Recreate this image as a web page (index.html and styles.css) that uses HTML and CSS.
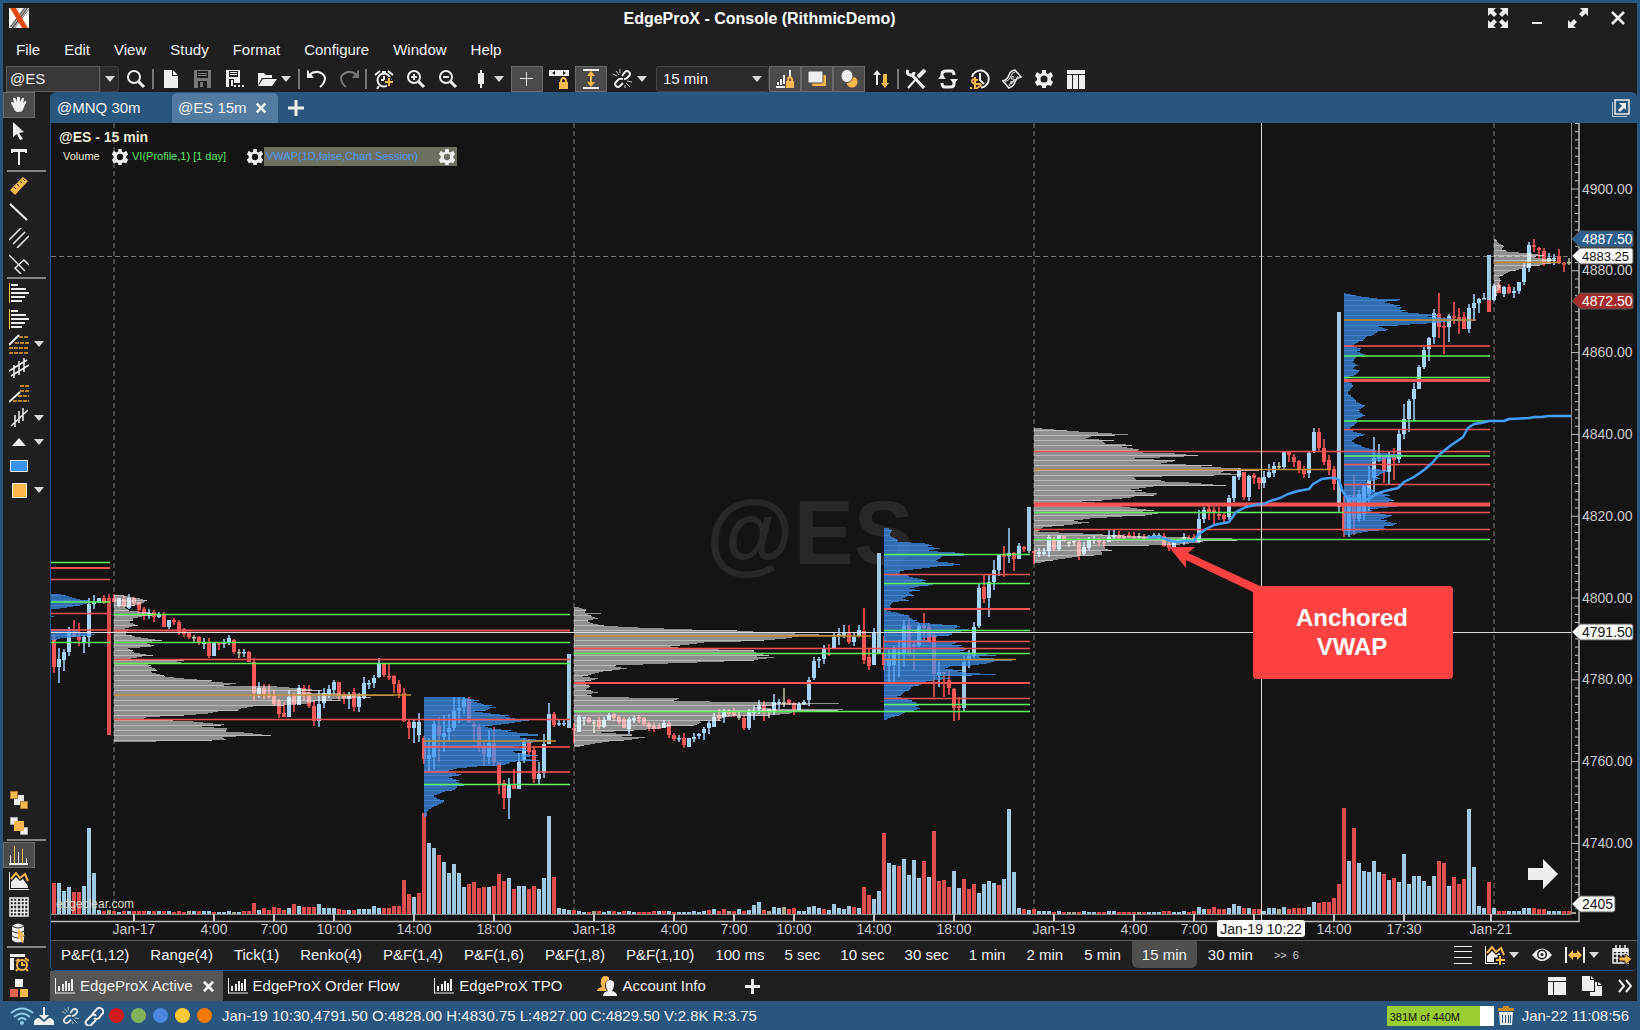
FILE: index.html
```html
<!DOCTYPE html>
<html lang="en">
<head>
<meta charset="utf-8">
<title>EdgeProX - Console (RithmicDemo)</title>
<link rel="stylesheet" href="styles.css">
</head>
<body>
<svg class="defs" aria-hidden="true">
  <defs>
    <symbol id="caret" viewBox="0 0 10 6"><path fill="#d8d8d8" d="M0 0h10L5 6z"/></symbol>
    <symbol id="gear" viewBox="0 0 20 20"><path fill="#eee" fill-rule="evenodd" d="M8 1h4v3l2 1 3-2 2 4-2 2v2l2 2-2 4-3-1-2 1v2H8v-2l-2-1-3 1-2-4 2-2V9L1 7l2-4 3 2 2-1zM10 6.500a3.500 3.500 0 100 7 3.500 3.500 0 000-7z"/></symbol>
    <symbol id="close" viewBox="0 0 14 14"><path stroke="#f0f0f0" stroke-width="3" d="M2 2l10 10M12 2L2 12"/></symbol>
    <symbol id="plus" viewBox="0 0 16 16"><path stroke="#f0f0f0" stroke-width="3" d="M8 0v16M0 8h16"/></symbol>
    <symbol id="bars" viewBox="0 0 20 16"><path fill="none" stroke="#eee" stroke-width="1" d="M.5 0v15.500M0 15h20"/><path fill="#eee" d="M3 8h2v5H3zM7 6h2v7H7zM10 3h2v10h-2zM13 5h2v8h-2zM16 1h2v12h-2z"/></symbol>
    <symbol id="unlink" viewBox="0 0 20 20"><path fill="none" stroke="#eee" stroke-width="2" d="M9 7l3-4q2-2 4 0t0 4l-2 2q-1 1-3 1M10 10q-4-1-5 1l-2 2q-2 2 0 4t4 0l3-3"/><path stroke="#ccc" d="M3 2l3 4M0 5l4 2M7 0v4M13 14l4 4M12 16v3M14 12l5 1"/></symbol>
    <symbol id="link" viewBox="0 0 20 20"><path fill="none" stroke="#eee" stroke-width="2" d="M8 9q1-2 4-5 3-4 6-1t0 5l-3 4q-3 2-5 0M12 10q-2-3-5 0l-4 4q-3 3 0 5t5-1l4-4"/></symbol>
    <symbol id="area" viewBox="0 0 20 20"><path stroke="#eee" d="M.5 1v18M0 18.500h20"/><path fill="#eee" d="M2 17V11l5-5 4 4 3-2 5 7v2z"/><path fill="none" stroke="#ffb84d" stroke-width="2" d="M2 8l5-6 4 5 5-4 3 7"/></symbol>
    <symbol id="lens" viewBox="0 0 20 20"><circle cx="8" cy="8" r="6" fill="none" stroke="#eee" stroke-width="2"/><path stroke="#eee" stroke-width="3" d="M12 12l6 6"/></symbol>
  </defs>
</svg>
<div class="window">
  <header class="titlebar">
    <svg class="logo" viewBox="0 0 20 20"><path fill="#fff" d="M0 0h20v20H0z"/><path stroke="#555" stroke-width="5" d="M18 0L3 20"/><path stroke="#ddd" d="M17 0L2 20M19 1L5 20"/><path fill="#e24a10" d="M1 0h6l12 20h-6z"/></svg>
    <h1 class="title">EdgeProX - Console (RithmicDemo)</h1>
    <div class="winctl">
      <button aria-label="Full screen"><svg width="20" height="20" viewBox="0 0 20 20"><path fill="#eee" d="M0 0h8L5.500 2.500 9 6 6 9 2.500 5.500 0 8zM20 0v8l-2.500-2.500L14 9l-3-3 3.500-3.500L12 0zM0 20v-8l2.500 2.500L6 11l3 3-3.500 3.500L8 20zM20 20h-8l2.500-2.500L11 14l3-3 3.500 3.500L20 12z"/></svg></button>
      <button aria-label="Minimize"><svg width="20" height="20" viewBox="0 0 20 20"><path fill="#eee" d="M4 14h10v2H4z"/></svg></button>
      <button aria-label="Maximize"><svg width="20" height="20" viewBox="0 0 20 20"><path fill="#eee" d="M20 0v8l-2.500-2.500L14 9l-3-3 3.500-3.500L12 0zM0 20v-8l2.500 2.500L6 11l3 3-3.500 3.500L8 20z"/></svg></button>
      <button aria-label="Close"><svg width="20" height="20" viewBox="0 0 20 20"><path stroke="#f0f0f0" stroke-width="2.500" d="M4 4l12 12M16 4L4 16"/></svg></button>
    </div>
  </header>
  <nav class="menu">
    <button>File</button><button>Edit</button><button>View</button><button>Study</button><button>Format</button><button>Configure</button><button>Window</button><button>Help</button>
  </nav>
  <div class="toolbar">
    <div class="symbol"><input type="text" value="@ES" aria-label="Symbol"><button aria-label="Symbol list"><svg width="10" height="6"><use href="#caret"/></svg></button></div>
    <button class="tool" aria-label="Search"><svg width="20" height="20"><use href="#lens"/></svg></button>
    <i class="sep"></i>
    <button class="tool" aria-label="New"><svg width="20" height="20" viewBox="0 0 20 20"><path fill="#eee" d="M3 1h8v6h6v12H3zM12 1l5 5h-5z"/></svg></button>
    <button class="tool" aria-label="Save"><svg width="20" height="20" viewBox="0 0 20 20"><path fill="#777" fill-rule="evenodd" d="M1 1h17v18H1zM4 2v7h11V2zM5 12v7h9v-7z"/><path fill="#777" d="M5 4h9v1H5zM5 6h9v1H5zM7 13h3v5H7z"/></svg></button>
    <button class="tool" aria-label="Save as"><svg width="20" height="20" viewBox="0 0 20 20"><path fill="#eee" fill-rule="evenodd" d="M1 1h14v13H9v-4H4v8H1zM4 2v6h9V2z"/><path fill="#eee" d="M5 3h7v1H5zM5 5h7v1H5zM6 11h2v6H6zM9 16h2v2H9zM13 16h2v2h-2zM17 16h2v2h-2z"/></svg></button>
    <button class="tool" aria-label="Open"><svg width="20" height="20" viewBox="0 0 20 20"><path fill="#eee" d="M1 4h6l2 2h6v3H5l-4 7zM6 10h14l-5 7H1z"/></svg></button>
    <button class="drop" aria-label="Recent files"><svg width="10" height="6"><use href="#caret"/></svg></button>
    <i class="sep"></i>
    <button class="tool" aria-label="Undo"><svg width="20" height="20" viewBox="0 0 20 20"><path fill="#eee" d="M0 1l2 1v4l2-1 3 4H0z"/><path fill="none" stroke="#eee" stroke-width="2" d="M2 6q6-5 12-2t3 9q-1 3-4 5"/></svg></button>
    <button class="tool" aria-label="Redo"><svg width="20" height="20" viewBox="0 0 20 20"><path fill="#777" d="M20 1l-2 1v4l-2-1-3 4h7z"/><path fill="none" stroke="#777" stroke-width="2" d="M18 6q-6-5-12-2t-3 9q1 3 4 5"/></svg></button>
    <i class="sep"></i>
    <button class="tool" aria-label="Alarm"><svg width="20" height="20" viewBox="0 0 20 20"><circle cx="10" cy="11" r="6.500" fill="none" stroke="#eee" stroke-width="2"/><path fill="none" stroke="#eee" stroke-width="2" d="M1 6l5-4M14 2l5 4M10 7v4H7M5 17l-2 3M8 3h4"/><path stroke="#1f1f1f" stroke-width="4" d="M15 8v10M10 13h10"/><path stroke="#ffb84d" stroke-width="2" d="M15 9v8M11 13h8"/></svg></button>
    <button class="tool" aria-label="Zoom in"><svg width="20" height="20"><use href="#lens"/><path stroke="#eee" stroke-width="2" d="M5 8h6M8 5v6"/></svg></button>
    <button class="tool" aria-label="Zoom out"><svg width="20" height="20"><use href="#lens"/><path stroke="#eee" stroke-width="2" d="M5 8h6"/></svg></button>
    <button class="tool" aria-label="Bar type"><svg width="20" height="20" viewBox="0 0 20 20"><path fill="#eee" d="M10 1h2v3h2v11h-2v4h-2v-4H8V4h2z"/></svg></button>
    <button class="drop" aria-label="Bar types"><svg width="10" height="6"><use href="#caret"/></svg></button>
    <button class="tool on" aria-label="Crosshair"><svg width="20" height="20" viewBox="0 0 20 20"><path stroke="#eee" d="M9.500 3v14M3 9.500h13"/></svg></button>
    <button class="tool" aria-label="Lock range"><svg width="20" height="20" viewBox="0 0 20 20"><path fill="#eee" fill-rule="evenodd" d="M0 1h20v6H0zM3 4l3 2V2zM17 4l-3-2v4z"/><path fill="#ffb84d" d="M10 13h9v7h-9z"/><path fill="none" stroke="#ffb84d" stroke-width="2" d="M12 13q0-4 2.500-4t2.500 4"/></svg></button>
    <button class="tool on" aria-label="Fit vertical"><svg width="20" height="20" viewBox="0 0 20 20"><path fill="#eee" d="M2 0h16v2H2zM2 18h16v2H2z"/><path fill="#ffb84d" d="M10 2l4 5h-3v6h3l-4 5-4-5h3V7H6z"/></svg></button>
    <button class="tool" aria-label="Unlink"><svg width="20" height="20"><use href="#unlink"/></svg></button>
    <button class="drop" aria-label="Link options"><svg width="10" height="6"><use href="#caret"/></svg></button>
    <div class="barsize"><select aria-label="Bar size"><option>15 min</option></select><svg width="10" height="6"><use href="#caret"/></svg></div>
    <button class="tool on" aria-label="Lock volume"><svg width="20" height="20" viewBox="0 0 20 20"><path fill="#eee" d="M1 17h9v2H1zM2 13h2v3H2zM5 10h2v6H5zM8 6h2v9H8zM14 1h2v7h-2z"/><path fill="#ffb84d" d="M11 12h8v7h-8z"/><path fill="none" stroke="#ffb84d" stroke-width="2" d="M13 12q0-4 2-4t2 4"/></svg></button>
    <button class="tool on" aria-label="Panels"><svg width="20" height="20" viewBox="0 0 20 20"><rect x="5" y="6" width="14" height="11" rx="1" fill="#ffb84d"/><rect x="1" y="2" width="15" height="12" rx="1" fill="#eee" stroke="#4b4b4b"/></svg></button>
    <button class="tool on" aria-label="Overlays"><svg width="20" height="20" viewBox="0 0 20 20"><circle cx="13" cy="13" r="5.500" fill="#ffb84d"/><ellipse cx="8" cy="7" rx="6" ry="6.500" fill="#eee" stroke="#4b4b4b"/></svg></button>
    <button class="tool" aria-label="Up and down"><svg width="20" height="20" viewBox="0 0 20 20"><path fill="#eee" d="M6 1l4 5H7v10H5V6H2z"/><path fill="#ffb84d" d="M14 19l-4-5h2V5h4v9h2z"/></svg></button>
    <i class="sep"></i>
    <button class="tool" aria-label="Tools"><svg width="20" height="20" viewBox="0 0 20 20"><path fill="none" stroke="#eee" stroke-width="3" d="M5 5l13 14M2 1q-2 4 2 5t4-3"/><path stroke="#eee" stroke-width="4" d="M12 8l7-7"/><path stroke="#eee" stroke-width="2" d="M11 9L2 19"/></svg></button>
    <button class="tool" aria-label="Refresh"><svg width="20" height="20" viewBox="0 0 20 20"><path fill="none" stroke="#eee" stroke-width="3" d="M4 8V5q0-3 4-3h5q3 0 3 4M16 12v3q0 3-4 3H7q-3 0-3-4"/><path fill="#eee" d="M0 10h8L4 5zM12 10h8l-4 5z"/></svg></button>
    <button class="tool" aria-label="Trade history"><svg width="20" height="20" viewBox="0 0 20 20"><path fill="none" stroke="#eee" stroke-width="2" d="M2 8a8.500 8.500 0 119 10.500M10 4v7l4 4"/><path fill="none" stroke="#ffb84d" stroke-width="2" d="M8 11q-6-2-6 1t6 3-1 4-6-1M5 8v12"/></svg></button>
    <button class="tool" aria-label="Orders"><svg width="20" height="20" viewBox="0 0 20 20"><path fill="none" stroke="#eee" stroke-width="1.500" d="M1 12q5-2 6-6t6-5l6 7q-5 1-6 5t-6 6z"/><path fill="none" stroke="#eee" d="M3 13q5-2 6-6t4-4M7 17q1-4 4-5t5-5M12 8q-3-1-3 1t2 1 0 3-2-1"/></svg></button>
    <button class="tool" aria-label="Settings"><svg width="20" height="20"><use href="#gear"/></svg></button>
    <button class="tool" aria-label="Table"><svg width="20" height="20" viewBox="0 0 20 20"><path fill="#eee" d="M1 1h18v4H1zM1 6h5v14H1zM7 6h5v14H7zM13 6h6v14h-6z"/></svg></button>
  </div>

  <div class="body">
    <aside class="side">
      <button class="stool on" aria-label="Pan"><svg width="20" height="20" viewBox="0 0 20 20"><path fill="#eee" d="M3 10Q1 7 3 7l2 1-1-5q2-1 3 1l1 3V2q2-1 3 1v4l2-4q2-1 2 1l-1 4 2-2q2 0 1 2-2 3-3 7-1 2-4 2H8q-2 0-3-3z"/></svg></button>
      <button class="stool" aria-label="Select"><svg width="20" height="20" viewBox="0 0 20 20"><path fill="#eee" d="M4 1l11 10-5 1 4 6-3 1-3-6-4 3z"/></svg></button>
      <button class="stool" aria-label="Text"><svg width="20" height="20" viewBox="0 0 20 20"><path fill="#eee" d="M2 2h16v4h-2V5h-5v13H9V5H4v1H2z"/></svg></button>
      <hr>
      <button class="stool" aria-label="Ruler"><svg width="20" height="20" viewBox="0 0 20 20"><path fill="#ffb84d" d="M1 14L14 1l5 4L6 19z"/><path stroke="#1f1f1f" d="M5 11l2 2M8 8l2 2M11 5l2 2M14 3l2 2"/></svg></button>
      <button class="stool" aria-label="Line"><svg width="20" height="20" viewBox="0 0 20 20"><path stroke="#eee" stroke-width="2" d="M1 2l17 16"/></svg></button>
      <button class="stool" aria-label="Channel"><svg width="20" height="20" viewBox="0 0 20 20"><path stroke="#eee" stroke-width="1.500" d="M0 12L12 0M4 16L16 4M8 20L20 8"/></svg></button>
      <button class="stool" aria-label="Pitchfork"><svg width="20" height="20" viewBox="0 0 20 20"><path fill="none" stroke="#eee" stroke-width="1.500" d="M0 1l9 9M12 20l-6-6 9-8 5 5M9 10l7 7"/></svg></button>
      <hr>
      <button class="stool" aria-label="Profile"><svg width="20" height="20" viewBox="0 0 20 20"><path fill="#ffb84d" d="M0 0h1v20H0z"/><path fill="#eee" d="M2 1h7v2H2zM2 5h15v2H2zM2 9h18v2H2zM2 13h14v2H2zM2 17h11v2H2z"/></svg></button>
      <button class="stool" aria-label="Volume imprint"><svg width="20" height="20" viewBox="0 0 20 20"><path fill="#ffb84d" d="M0 0h1v20H0z"/><path fill="#eee" d="M2 1h7v2H2zM2 5h15v2H2zM2 9h18v2H2zM2 13h14v2H2zM2 17h11v2H2z"/></svg></button>
      <div class="stool low"><button aria-label="Fibonacci"><svg width="20" height="20" viewBox="0 0 20 20"><path stroke="#b9822c" stroke-width="2" stroke-dasharray="4 1" d="M10 3h10M6 9h14M0 14h20M0 19h20"/><path stroke="#eee" stroke-width="2" d="M0 11L10 1"/></svg></button><button aria-label="More retracements"><svg width="10" height="6"><use href="#caret"/></svg></button></div>
      <button class="stool low" aria-label="Gann"><svg width="20" height="20" viewBox="0 0 20 20"><path stroke="#eee" stroke-width="1.500" d="M0 13L18 2M2 18L20 7M5 7v13M10 3v14M15 0v14"/></svg></button>
      <button class="stool" aria-label="Extension"><svg width="20" height="20" viewBox="0 0 20 20"><path stroke="#b9822c" stroke-width="2" stroke-dasharray="4 1" d="M11 3h9M11 8h9M9 13h11M4 18h16"/><path stroke="#eee" stroke-width="2" d="M0 19L11 9"/></svg></button>
      <div class="stool low"><button aria-label="Waves"><svg width="20" height="20" viewBox="0 0 20 20"><path stroke="#eee" stroke-width="1.500" d="M2 18L19 2M6 7v12M10 3v12M14 0v13"/></svg></button><button aria-label="More waves"><svg width="10" height="6"><use href="#caret"/></svg></button></div>
      <div class="stool low"><button aria-label="Marker"><svg width="20" height="20" viewBox="0 0 20 20"><path fill="#eee" d="M10 6l7 8H3z"/></svg></button><button aria-label="More markers"><svg width="10" height="6"><use href="#caret"/></svg></button></div>
      <button class="stool low" aria-label="Rectangle"><svg width="20" height="20" viewBox="0 0 20 20"><path fill="#3a93ef" stroke="#eee" d="M1.500 4.500h17v11h-17z"/></svg></button>
      <div class="stool low"><button aria-label="Colour"><svg width="20" height="20" viewBox="0 0 20 20"><path fill="#ffb84d" stroke="#eee" d="M3.500 3.500h14v14h-14z"/></svg></button><button aria-label="More colours"><svg width="10" height="6"><use href="#caret"/></svg></button></div>
      <span class="fill"></span>
      <button class="stool" aria-label="To back"><svg width="20" height="20" viewBox="0 0 20 20"><path fill="#eee" d="M5 5h10v10H5z"/><path fill="#ffb84d" stroke="#a87a30" d="M1.500 1.500h7v7h-7zM11.500 11.500h7v7h-7z"/></svg></button>
      <button class="stool" aria-label="To front"><svg width="20" height="20" viewBox="0 0 20 20"><path fill="#eee" stroke="#aaa" d="M1.500 1.500h7v7h-7zM11.500 11.500h7v7h-7z"/><path fill="#ffb84d" d="M5 5h10v10H5z"/></svg></button>
      <hr>
      <button class="stool on" aria-label="Volume"><svg width="20" height="20" viewBox="0 0 20 20"><path fill="#eee" d="M1 10h1v8H1zM9 7h1v11H9zM17 13h1v5h-1zM0 18h19v2H0z"/><path fill="#ffb84d" d="M5 1h1v17H5zM13 4h1v14h-1z"/></svg></button>
      <button class="stool" aria-label="Area chart"><svg width="20" height="20"><use href="#area"/></svg></button>
      <button class="stool" aria-label="Grid"><svg width="20" height="20" viewBox="0 0 20 20"><path fill="none" stroke="#eee" stroke-width="1.500" d="M1 1h18v18H1zM1 4.500h18M1 8h18M1 12h18M1 15.500h18M4.500 1v18M8 1v18M12 1v18M15.500 1v18"/></svg></button>
      <button class="stool" aria-label="Data"><svg width="20" height="20" viewBox="0 0 20 20"><path fill="#eee" d="M3 3q6-5 12 0v14q-6 5-12 0z"/><path fill="none" stroke="#333" d="M3 3q6 4 12 0M3 8q6 4 12 0M3 13q6 4 12 0"/><path fill="#ffb84d" d="M9 6l7 7-3 1 2 5-2 1-2-5-2 2z"/></svg></button>
      <hr>
      <button class="stool" aria-label="Alerts"><svg width="20" height="20" viewBox="0 0 20 20"><path fill="#eee" d="M1 2h15v3H1zM1 6h4v12H1z"/><circle cx="13" cy="13" r="5" fill="none" stroke="#ffb84d" stroke-width="2"/><path stroke="#ffb84d" stroke-width="2" d="M7 9l3-2M16 6l4 3M13 10v3h3M9 17l-2 2M17 17l2 2"/></svg></button>
      <button class="stool" aria-label="Components"><svg width="20" height="20" viewBox="0 0 20 20"><path fill="#eee" d="M6 1h8v8H6z"/><path fill="#e8634f" d="M1 11h8v8H1z"/><path fill="#ffb84d" d="M11 11h8v8h-8z"/></svg></button>
    </aside>

    <main class="main">
      <div class="panel">
        <div class="tabs">
          <button class="tab">@MNQ 30m</button>
          <div class="tab active"><button>@ES 15m</button><button class="x" aria-label="Close tab"><svg width="12" height="12"><use href="#close"/></svg></button></div>
          <button class="add" aria-label="Add tab"><svg width="16" height="16"><use href="#plus"/></svg></button>
          <button class="pop" aria-label="Pop out"><svg width="18" height="18" viewBox="0 0 18 18"><path fill="none" stroke="#b9c7d8" d="M.5 3v14.500H15"/><path fill="none" stroke="#eee" stroke-width="1.500" d="M3 1h14v14H3z"/><path fill="#eee" d="M7 4h7v7l-2-2-4 4-2-2 4-4z"/></svg></button>
        </div>
        <div class="chart">
          <svg id="plot" viewBox="51 123 1586 817" preserveAspectRatio="xMinYMin meet" role="img" aria-label="@ES 15 minute chart"></svg>
          <div class="legend">
            <h2>@ES - 15 min</h2>
            <div class="studies">
              <span class="vol">Volume</span>
              <button aria-label="Volume settings"><svg width="18" height="18"><use href="#gear"/></svg></button>
              <span class="vi">VI(Profile,1) [1 day]</span>
              <button aria-label="Profile settings"><svg width="18" height="18"><use href="#gear"/></svg></button>
              <span class="vwap">VWAP(1D,false,Chart Session)<button aria-label="VWAP settings"><svg width="18" height="18"><use href="#gear"/></svg></button></span>
            </div>
          </div>
        </div>
        <div class="frames">
          <div class="group spaced"><button>P&amp;F(1,12)</button><button>Range(4)</button><button>Tick(1)</button><button>Renko(4)</button><button>P&amp;F(1,4)</button><button>P&amp;F(1,6)</button><button>P&amp;F(1,8)</button><button>P&amp;F(1,10)</button></div>
          <div class="group"><button>100 ms</button><button>5 sec</button><button>10 sec</button><button>30 sec</button></div>
          <div class="group spaced"><button>1 min</button><button>2 min</button><button>5 min</button><button class="sel">15 min</button><button>30 min</button></div>
          <button class="more">&gt;&gt;&nbsp; 6</button>
          <div class="ricons">
            <button aria-label="List"><svg width="18" height="20" viewBox="0 0 18 20"><path stroke="#eee" d="M0 1.500h18M0 6.500h18M0 12.500h18M0 18.500h18"/></svg></button>
            <button class="pair" aria-label="Add study"><svg width="20" height="20"><use href="#area"/><path stroke="#1f1f1f" stroke-width="5" d="M15 10v10M9 15h11"/><path stroke="#ffb84d" stroke-width="2" d="M15 11v9M11 15h9"/></svg><svg width="10" height="6"><use href="#caret"/></svg></button>
            <button aria-label="Visibility"><svg width="20" height="20" viewBox="0 0 20 20"><path fill="#eee" d="M0 10q10-13 20 0-10 12-20 0z"/><circle cx="10" cy="9.500" r="5" fill="#1f1f1f"/><circle cx="10" cy="9.500" r="3.500" fill="#eee"/><circle cx="10" cy="9.500" r="1.500" fill="#1f1f1f"/></svg></button>
            <button class="pair" aria-label="Spacing"><svg width="20" height="20" viewBox="0 0 20 20"><path fill="#eee" d="M0 2h2v16H0zM18 2h2v16h-2z"/><path fill="#ffb84d" d="M3 10l5-5v3h4V5l5 5-5 5v-3H8v3z"/></svg><svg width="10" height="6"><use href="#caret"/></svg></button>
            <button aria-label="Go to date"><svg width="20" height="20" viewBox="0 0 20 20"><path fill="none" stroke="#eee" stroke-width="1.500" d="M1 4h15v14H1zM1 9h15M1 13h15M5 7v11M9 7v11M13 7v11M4 0v4M8 0v4M13 0v4"/><path fill="#eee" d="M1 3h15v4H1z"/><path fill="#ffb84d" stroke="#1f1f1f" d="M7 12h6V9l7 5-7 6v-4H7z"/></svg></button>
          </div>
        </div>
      </div>
      <div class="workspaces">
        <div class="ws active"><svg width="20" height="16"><use href="#bars"/></svg><button>EdgeProX Active</button><button class="x" aria-label="Close workspace"><svg width="13" height="13" viewBox="0 0 14 14"><use href="#close"/></svg></button></div>
        <div class="ws"><svg width="20" height="16"><use href="#bars"/></svg><button>EdgeProX Order Flow</button></div>
        <div class="ws"><svg width="20" height="16"><use href="#bars"/></svg><button>EdgeProX TPO</button></div>
        <div class="ws"><svg width="20" height="20" viewBox="0 0 20 20"><path fill="#ffb84d" d="M8 0q5 0 4 4-4 0-4 6 0 3 2 5H0q0-3 5-4-2-3-1-7 1-4 4-4z"/><path fill="#eee" d="M13 4q5 0 4 6-1 4-2 5 5 1 5 5H6q0-4 5-5-2-2-2-5-1-6 4-6z"/></svg><button>Account Info</button></div>
        <button class="add" aria-label="Add workspace"><svg width="15" height="15" viewBox="0 0 16 16"><use href="#plus"/></svg></button>
        <div class="wicons">
          <button aria-label="Layout"><svg width="18" height="18" viewBox="0 0 18 18"><path fill="#eee" d="M0 0h18v4H0zM0 5h5v13H0zM6 5h12v13H6z"/></svg></button>
          <button aria-label="Copy"><svg width="20" height="20" viewBox="0 0 20 20"><path fill="#eee" d="M0 0h8v4h4v11H0zM9 0l3 3H9zM8 16h5V6h2v4h5v10H8zM16 6l4 3h-4z"/></svg></button>
          <button aria-label="More"><svg width="14" height="14" viewBox="0 0 14 14"><path fill="none" stroke="#eee" stroke-width="2" d="M1 1l5 6-5 6M8 1l5 6-5 6"/></svg></button>
        </div>
      </div>
    </main>
  </div>

  <footer class="status">
    <svg width="24" height="18" viewBox="0 0 24 18"><path fill="none" stroke="#8ecbe8" stroke-width="2" d="M1 6q11-9 22 0M4 10q8-7 16 0M8 13q4-4 8 0"/><circle cx="12" cy="16" r="2" fill="#8ecbe8"/></svg>
    <svg width="20" height="20" viewBox="0 0 20 20"><path fill="#eee" d="M9 1h2v8h4l-5 5-5-5h4zM0 15l3-3h2l5 4 5-4h2l3 3v4H0z"/></svg>
    <svg class="gapl" width="18" height="18" viewBox="0 0 20 20"><use href="#unlink"/></svg>
    <svg width="20" height="20"><use href="#link"/></svg>
    <i class="dot red"></i><i class="dot green"></i><i class="dot blue"></i><i class="dot yellow"></i><i class="dot orange"></i>
    <span class="info">Jan-19 10:30,4791.50 O:4828.00 H:4830.75 L:4827.00 C:4829.50 V:2.8K R:3.75</span>
    <span class="mem">381M of 440M</span>
    <button aria-label="Free memory"><svg width="16" height="20" viewBox="0 0 16 20"><path fill="#c98a1c" d="M5 0h6v2h5v3H0V2h5z"/><path fill="#eee" d="M1 6h14l-1 13H2z"/><path stroke="#28567e" d="M4.500 9v8M7.500 9v8M10.500 9v8M12.500 9v8"/></svg></button>
    <time>Jan-22 11:08:56</time>
  </footer>
</div>
<script src="chart.js"></script>
</body>
</html>
```
FILE: styles.css
```css
* { box-sizing: border-box; }
body { margin: 0; background: #28567e; color: #f2f2f2; font: 15px/20px "Liberation Sans", Arial, sans-serif; }
button, input, select { font: inherit; color: inherit; background: none; border: 0; padding: 0; margin: 0; }
button { display: flex; align-items: center; justify-content: center; white-space: nowrap; }
svg { display: block; flex: none; }
.defs { position: absolute; width: 0; height: 0; }
.window { min-height: 100vh; display: flex; flex-direction: column; padding: 3px 3px 0; }
.titlebar, .menu, .toolbar { background: #1f1f1f; display: flex; align-items: center; }

.titlebar { height: 30px; padding: 0 9px 0 6px; }
.logo { width: 20px; height: 20px; }
.title { flex: 1; margin: 0; padding: 2px 0 0 2px; text-align: center; font-size: 16px; line-height: 20px; font-weight: bold; color: #fff; }
.winctl { display: flex; gap: 20px; align-items: center; }
.menu { height: 33px; padding-left: 1px; }
.menu button { padding: 0 12px; height: 28px; }

.toolbar { height: 26px; padding-left: 3px; }
.symbol { display: flex; width: 114px; height: 26px; }
.symbol input { width: 94px; height: 26px; padding: 0 3px 2px; background: #383838; border: 1px solid #5c5c5c; }
.symbol button { width: 19px; height: 26px; background: #2b2b2b; border: 1px solid #3c3c3c; border-radius: 0 3px 3px 0; }
.tool { width: 32px; height: 26px; flex: none; }
.on { background: #4b4b4b; border: 1px solid #6a6a6a; }
.drop { width: 14px; height: 26px; margin: 0 5px 0 -4px; flex: none; }
.sep { width: 2px; height: 20px; margin-right: 1px; background: #777; flex: none; }
.barsize { position: relative; width: 113px; height: 26px; margin-left: 2px; }
.barsize select { appearance: none; width: 100%; height: 26px; padding: 0 6px; background: #2a2a2a; border: 1px solid #444; border-radius: 3px; }
.barsize svg { position: absolute; right: 7px; top: 10px; pointer-events: none; }

.body { flex: 1; display: flex; background: #1f1f1f; }
.side { width: 47px; display: flex; flex-direction: column; }
.side hr { width: 39px; height: 3px; margin: 0 4px; border: solid #1f1f1f; border-width: 0 0 1px; background: #858585; flex: none; }
.stool { width: 32px; height: 26px; flex: none; display: flex; align-items: center; justify-content: center; }
.low { height: 24px; }
div.stool { width: 42px; justify-content: flex-start; padding-left: 6px; gap: 5px; }
.fill { flex: 1; }

.main { flex: 1; min-width: 0; display: flex; flex-direction: column; }
.panel { flex: 1; display: flex; flex-direction: column; border: 1px solid #28567e; border-top: 0; border-right: 0; border-radius: 5px; background: #141414; }
.tabs { height: 31px; display: flex; background: #28567e; border-radius: 5px 5px 0 0; padding: 1px 7px 0 0; }
.tab { width: 121px; padding: 0 6px; display: flex; align-items: center; justify-content: flex-start; }
.tab.active { width: 106px; gap: 8px; background: #527ba1; border-radius: 5px 5px 0 0; }
.add { width: 36px; }
.pop { margin-left: auto; }
.chart { position: relative; flex: 1; }
#plot { width: 100%; height: auto; }
.legend { position: absolute; left: 6px; top: 4px; }
.legend h2 { margin: 0; padding-left: 2px; font-size: 14px; line-height: 20px; color: #ececd2; }
.studies { display: flex; align-items: center; height: 19px; font-size: 11px; line-height: 19px; }
.vol { width: 54px; padding-left: 6px; color: #ececd2; }
.vi { width: 117px; padding-left: 3px; color: #5fe86a; }
.vwap { width: 193px; height: 19px; padding: 0 1px 0 2px; display: flex; align-items: center; justify-content: space-between; background: #6d6f60; color: #4f9bff; }

.frames { height: 30px; display: flex; align-items: stretch; background: #1f1f1f; border-top: 1px solid #5a5a5a; border-radius: 0 0 5px 5px; padding-bottom: 2px; }
.group { display: flex; align-items: stretch; }
.spaced button { margin-right: 1px; }
.frames > button, .group button { padding: 0 10px; }
.frames .sel { background: #4f4f4f; border-radius: 0 0 6px 6px; }
.frames .more { font-size: 11px; color: #ccc; }
.ricons { margin-left: auto; display: flex; align-items: center; gap: 13px; padding-right: 5px; }
.pair { gap: 4px; }
.workspaces { height: 30px; display: flex; align-items: center; }
.ws { display: flex; align-items: center; height: 30px; padding: 0 30px 0 5px; gap: 5px; }
.ws.active { background: #555; padding-right: 8px; }
.ws .x { margin-left: 4px; }
.workspaces .add { margin-left: -1px; }
.wicons { margin-left: auto; display: flex; align-items: center; gap: 16px; padding-right: 5px; }

.status { height: 29px; display: flex; align-items: center; padding: 0 8px 0 7px; }
.gapl { margin: 0 4px 0 8px; }
.dot { width: 15px; height: 15px; border-radius: 50%; margin-left: 7px; }
.status .dot.red { background: #cf1b1b; margin-left: 5px; }
.green { background: #82b35c; }
.blue { background: #4a86dc; }
.yellow { background: #ffc835; }
.orange { background: #f27a00; }
.info { margin-left: 10px; flex: 1; white-space: nowrap; }
.mem { width: 107px; height: 20px; padding-left: 3px; margin-right: 4px; font-size: 11px; line-height: 22px; color: #111; background: linear-gradient(90deg, #9acd32 93px, #fff 93px); }
.status time { margin-left: 8px; }

#plot text { font-family: "Liberation Sans", Arial, sans-serif; font-size: 14px; fill: #c8c8c8; }
#plot text.mark { font-size: 90px; font-weight: bold; fill: #282828; }
#plot text.note { font-size: 24px; font-weight: bold; fill: #fff; text-anchor: middle; }
#plot text.mid { text-anchor: middle; }
#plot text.dark { fill: #111; }
#plot text.light { fill: #fff; }
#plot text.small { font-size: 13px; }
#plot text.site { font-size: 12px; fill: #d8d8c4; }
```
FILE: chart.js
```js
const NS = 'http://www.w3.org/2000/svg';
const plot = document.getElementById('plot');
function add(tag, attrs, text) {
  const e = document.createElementNS(NS, tag);
  for (const k in attrs) e.setAttribute(k, attrs[k]);
  if (text !== undefined) e.textContent = text;
  plot.appendChild(e);
  return e;
}
const COL = { r: '#ff5757', b: '#a4d3ff', y: '#c0c0a0' };
const VCOL = { r: '#e04f50', b: '#9dc8df', y: '#a8a88c' };
const STEP = 5;

/* bars: colour, high, body top, body bottom, low; offsets below `base` */
const candles = [
  { x: 54, base: 540, d: 'r 94 99 127 133,b 108 119 127 143,b 109 112 120 131,b 87 92 112 116,r 80 92 97 97,r 83 97 100 106,b 95 97 102 113,b 58 64 97 107,b 55 62 64 69,b 58 58 63 63,r 55 58 63 64,r 54 58 195 195,r 54 58 62 62,b 58 58 66 67,r 56 59 66 67,b 54 58 68 69,r 57 58 63 66,r 62 62 70 74,r 67 69 74 80,b 69 73 75 79,r 70 72 77 82,b 72 74 77 78,r 72 74 87 87,b 80 80 87 89,r 78 80 82 85,r 80 82 93 95,r 88 89 94 97,r 92 93 97 99,y 95 97 98 102,r 96 97 102 105,b 98 102 104 109,r 98 102 116 118,b 102 102 116 116,r 102 103 104 110,b 99 102 104 108,b 95 98 102 105,r 99 100 112 114,y 109 112 113 118,b 109 112 113 117,r 111 112 122 122,r 118 122 153 160,b 142 148 154 158,r 144 148 154 159,r 144 154 157 159,r 150 156 164 166,r 159 161 174 178,r 162 173 177 177,b 150 157 177 177,r 153 155 164 172,b 145 148 165 165,r 145 148 155 161,r 145 152 166 168,r 160 166 181 186,b 150 164 181 187,b 148 153 163 168,b 145 149 154 158,b 140 142 150 154,r 142 142 155 160,r 152 155 158 164,b 152 154 159 169,r 148 152 167 171,b 153 157 167 172,b 137 143 158 159,b 140 143 144 149,b 135 138 143 148,b 118 123 137 138,r 123 124 135 137,r 124 136 137 140,r 135 136 144 153,r 140 144 153 158,r 148 153 181 182,r 180 182 188 199,b 180 182 188 203,b 173 182 195 202' },
  { x: 424, base: 590, d: 'r 146 148 169 174,b 148 165 169 181,b 131 134 167 179,r 127 136 145 172,b 125 143 147 162,b 124 138 142 152,b 107 121 138 141,b 107 118 120 133,b 107 109 117 124,r 107 109 132 133,r 131 134 137 151,r 134 137 157 162,r 152 156 164 176,b 140 153 167 174,r 137 153 172 176,r 172 172 194 204,r 190 193 208 219,b 188 194 208 229,r 179 194 199 199,b 163 172 199 199,b 148 150 170 173,r 149 151 162 165,r 157 160 189 193,b 172 184 189 195,b 144 154 183 188,b 113 124 154 154,r 122 124 135 137,b 130 133 134 136,b 130 133 134 136,b 64 64 138 138,r 133 138 140 153,b 125 127 142 142,b 127 127 128 135,r 127 128 132 133,y 130 132 133 143,r 127 130 137 139,b 127 130 137 138,b 123 125 130 130,r 123 124 128 131,r 126 127 132 134,r 127 129 138 138,b 127 129 139 144,b 126 128 130 133,r 125 127 129 133,r 127 128 134 135,r 132 133 137 141,r 132 136 139 142,r 133 137 139 139,b 130 133 138 138,r 131 133 145 148,r 143 145 149 151,b 145 148 149 152,r 143 148 155 158,b 148 148 157 157,b 143 147 149 152,b 143 144 146 149,b 137 139 143 150,b 131 133 138 144,b 123 127 137 137,r 119 125 128 131,b 119 122 127 133,r 119 122 124 126,r 118 122 126 127,y 122 126 128 130,r 125 128 138 140,b 119 121 138 140,b 115 121 123 130,b 110 115 119 124,r 111 115 121 131,y 119 119 122 128,b 104 112 121 125,b 109 112 113 119,y 98 112 113 117,r 109 110 114 115,r 112 113 119 125,b 112 114 120 120,b 110 112 114 115,b 87 90 110 116' },
  { x: 814, base: 490, d: 'b 167 171 188 190,b 167 169 170 178,b 155 159 169 174,r 154 163 164 166,b 143 147 158 158,b 138 144 145 155,b 135 143 146 148,r 135 142 152 154,b 143 147 152 156,b 135 140 146 147,r 118 141 170 174,r 158 167 176 180,b 138 143 175 175,b 63 63 163 163,r 146 164 175 180,b 159 170 176 192,b 156 159 175 192,b 150 162 164 187,b 130 136 163 177,r 129 135 163 166,r 152 154 157 180,b 133 136 155 157,r 123 136 138 150,r 133 137 151 153,r 143 145 184 207,b 171 182 185 197,r 182 182 184 207,r 180 190 198 205,r 198 199 218 231,r 207 216 218 230,b 166 172 218 222,b 160 166 170 178,b 132 137 166 168,b 93 98 136 138,r 84 97 109 113,b 85 92 108 127,b 70 80 92 100,b 64 65 80 86,r 56 65 66 87,b 38 63 66 73,r 62 63 69 81,b 53 56 69 69,r 56 57 59 62,b 17 17 61 63,r 61 61 63 74,b 58 62 64 67,b 58 62 64 65,b 45 47 61 67,r 47 49 59 61,b 45 46 59 61,r 46 46 51 52,y 51 52 53 57,y 49 51 52 56,r 48 52 65 70,b 52 57 64 65,b 47 50 58 60,b 46 49 50 54,r 48 50 52 55,r 49 52 53 57,b 40 47 52 52,b 40 45 47 49,r 41 46 48 50,r 44 46 47 50,r 42 45 47 48,r 42 46 47 49,y 43 46 47 50,r 44 47 48 50,b 45 47 48 50,b 43 45 47 48,b 43 45 47 49,r 43 46 56 57,r 52 54 58 61,b 51 52 58 58,b 49 50 51 52,b 43 47 52 55,r 45 48 49 51,r 44 47 51 52,b 20 29 52 53' },
  { x: 1204, base: 410, d: 'b 97 100 109 113,r 96 99 102 110,r 97 100 102 114,r 97 104 106 110,r 103 105 109 114,b 85 88 107 110,b 66 66 88 92,b 58 61 67 70,r 62 62 87 90,b 65 66 87 91,r 63 65 68 74,r 67 68 73 79,b 61 67 73 78,b 54 62 67 68,b 52 56 63 67,y 52 56 57 60,b 41 41 57 59,r 41 42 45 52,r 44 47 52 57,r 50 51 60 63,r 56 60 64 68,b 42 43 63 68,b 18 22 42 43,r 18 22 38 41,r 29 38 52 55,r 45 50 59 65,r 56 59 74 80' },
  { x: 1339, base: 220, d: 'b 92 92 287 292,r 276 285 311 317,b 275 278 311 317,r 255 276 299 315,b 270 274 299 302,b 264 265 294 300,b 246 260 274 291,b 217 238 258 272,b 224 237 238 242,r 235 236 251 263,b 232 236 252 264,r 228 237 240 260,b 210 214 239 243,b 184 199 214 219,b 179 181 199 212,b 163 169 179 201,b 145 147 169 169,b 127 130 147 149,b 117 118 129 141,b 89 93 117 124,r 73 94 107 118,r 97 106 107 134,b 94 96 107 122,r 82 96 97 104,r 88 97 100 114,r 92 97 109 109,b 84 88 109 113,b 74 83 88 101,b 78 79 83 93,b 73 78 79 79,r 80 80 92 92,b 64 66 80 81,r 62 65 73 73,b 66 67 74 77,r 64 67 73 74,b 67 71 73 78,b 62 62 71 74,b 43 48 62 65,b 22 25 48 52,r 19 25 27 32,r 27 28 30 38,r 28 31 44 46,b 33 38 44 44,b 34 38 39 45,r 29 36 43 44,r 42 43 44 52,y 38 42 43 45' },
  { x: 1489, base: 220, d: 'b 35 35 80 80' }
];

const volume = 'r30 b30 b22 b26 r21 r21 b27 b85 b40 b3 r2 y3 ' +
  'r2 b1 r2 b2 r2 r2 r2 b2 r2 b2 r2 b2 r1 r2 r1 y2 b2 r2 b2 b2 r1 b1 b1 b2 y1 b1 r2 r2 ' +
  'r10 b3 r5 r3 r6 r5 r3 b5 r9 b7 r6 r6 r6 b9 b5 b5 b5 r4 r3 b3 r3 b4 b4 b4 b7 b5 r5 r5 r7 r7 r33 r19 b16 r20 ' +
  'r100 b70 b65 r58 b51 b40 b49 b40 b26 r29 r31 r25 r26 b26 r27 r39 r32 b35 r24 b27 b27 r24 r27 b24 b35 b97 r36 b5 b4 b3 ' +
  'r3 b2 b1 r1 y2 r2 b1 b2 r2 b1 r2 b2 b1 r1 r1 r1 r2 b2 r2 b2 r1 b1 b1 b1 b2 b1 b2 r3 b4 r2 r4 y2 r2 b4 r2 ' +
  'b3 b8 b11 r3 y2 b6 b5 y6 r4 r5 b2 b2 b6 b7 b5 r4 b3 b9 b5 b4 b7 r6 b5 r26 r18 b14 b22 ' +
  'r80 b50 b48 r47 b54 b38 b53 b35 r52 b36 r82 r32 r33 r26 b42 b25 r34 r24 r29 b20 b29 b32 b30 r28 b34 b104 b41 b5 r4 b3 ' +
  'r4 b2 b2 b2 r1 b2 r1 y1 y1 r1 b2 b1 b1 r1 r1 b2 b2 r1 r1 r1 r1 y1 r1 b1 b1 b1 r2 r2 b1 b1 b2 r1 r2 ' +
  'b6 b4 r4 r6 r4 r4 b5 b9 b7 r5 b5 r4 r4 b2 b5 b5 y4 b6 r4 r5 r5 r5 b6 b11 r10 r11 r11 r15 ' +
  'r29 r105 b52 r85 b50 b42 b41 b52 b41 r39 b33 r35 b31 b59 b29 b37 b37 b32 b27 b37 r52 r50 b27 r36 r29 r34 b104 b46 b7 b5 r31 b5 r2 r2 b2 b2 b2 b5 b5 r5 r4 r4 b2 b2 b2 r2 r2 y1';

/* volume-at-price outlines: y and width pairs */
const profiles = [
  { x: 51, c: 'b', d: '594 10,596 20,599 30,600 38,602 43,604 33,606 25,608 10,609 0,615 0,616 3,617 0,628 0,629 24,632 34,634 45,636 34,638 10,640 3' },
  { x: 114, c: 'g', d: '595 10,598 28,601 35,603 30,607 12,610 15,612 40,614 44,618 20,622 18,625 24,628 12,630 16,634 12,637 30,640 48,643 35,646 42,648 15,652 22,655 39,658 18,660 70,663 75,664 35,668 44,672 42,675 50,678 74,681 110,683 130,685 110,686 185,688 200,690 208,692 215,693 240,695 280,697 282,699 225,701 228,703 205,705 170,708 135,711 118,713 100,715 70,717 35,719 28,721 90,724 113,726 100,728 120,730 112,732 143,735 157,737 120,739 115,740 98,741 48,742 1' },
  { x: 424, c: 'b', d: '697 45,700 55,704 62,707 79,708 70,711 58,714 78,716 92,719 100,721 110,723 90,725 68,728 72,731 95,734 118,737 105,739 115,741 130,744 100,748 105,752 100,754 108,756 120,758 105,760 115,762 95,764 85,766 60,768 35,770 25,772 30,774 38,777 28,780 35,784 42,786 38,789 32,792 20,795 10,798 14,801 23,804 15,807 9,810 4,814 3,817 2' },
  { x: 574, c: 'g', d: '607 6,609 12,612 12,613 29,614 14,618 26,620 14,623 20,625 30,627 70,629 122,631 203,632 190,633 235,635 270,638 225,640 190,641 190,642 143,645 106,648 119,650 180,651 205,653 195,655 195,657 220,659 190,661 170,663 100,665 42,668 56,670 38,673 22,676 10,678 26,681 12,684 12,686 18,689 12,692 26,694 13,696 20,697 60,698 112,700 100,701 155,703 282,705 200,708 210,709 277,711 250,713 230,715 195,717 165,719 150,722 140,725 120,728 90,730 60,732 30,734 60,736 55,737 78,739 60,741 40,743 22,745 10,747 3' },
  { x: 884, c: 'b', d: '528 5,530 8,535 6,538 12,541 15,543 44,546 50,548 60,550 45,552 78,554 93,556 66,558 60,560 52,562 70,564 78,566 60,568 40,570 20,573 16,576 28,579 40,582 45,584 50,586 40,588 28,590 36,592 27,595 30,598 20,600 25,602 10,605 6,608 8,610 3,612 14,616 28,619 30,622 38,624 60,626 86,628 75,630 100,632 75,634 70,636 60,638 40,640 45,642 80,644 70,646 85,648 90,650 80,653 100,655 112,657 105,659 130,661 125,663 110,666 75,668 65,670 78,672 90,674 115,676 60,678 70,680 50,682 45,684 38,687 30,690 25,693 20,696 15,699 25,702 35,705 35,708 38,710 30,713 20,716 12,718 4,720 2' },
  { x: 1034, c: 'g', d: '428 9,430 33,432 70,434 97,436 65,438 55,440 80,443 75,444 95,446 100,449 108,451 100,452 120,453 150,456 171,458 107,461 158,463 135,465 178,466 190,468 220,470 225,472 205,474 215,477 110,479 105,482 170,485 192,486 135,489 100,491 115,493 131,495 120,497 107,499 80,501 55,503 80,506 100,508 110,510 120,513 132,516 100,518 60,520 40,522 60,525 30,527 10,529 5,531 4,533 52,535 90,537 170,538 211,540 203,542 180,544 150,546 80,548 75,550 78,552 75,554 70,556 50,559 25,561 12,562 8,563 3' },
  { x: 1344, c: 'b', d: '293 2,295 12,298 35,299 58,302 45,304 52,307 64,309 58,312 70,314 90,316 95,318 115,320 130,322 108,324 68,326 40,329 45,332 36,335 28,338 22,342 15,345 8,348 18,351 15,354 22,356 15,359 10,362 10,365 14,368 10,371 17,374 12,377 5,380 4,383 8,386 10,389 6,393 4,397 10,400 12,403 17,406 23,409 15,412 18,416 22,419 12,422 14,425 10,428 6,431 10,434 22,437 14,440 8,443 12,446 20,449 30,452 35,454 60,456 66,459 42,462 30,465 28,468 30,471 50,473 40,475 35,478 38,481 25,484 25,487 26,490 30,494 45,497 48,500 50,503 55,506 60,509 25,512 34,516 52,519 38,523 56,526 45,529 43,532 20,535 2' },
  { x: 1494, c: 'g', d: '239 2,243 5,246 11,249 8,251 15,253 40,255 50,257 45,259 60,262 65,264 50,266 42,268 30,271 18,274 10,277 6,280 7,283 5,287 8,290 4,294 3,298 1,300 1' }
];

/* study levels: colour, x1, x2, y, thickness */
const levels = 'g 51 110 562.5 1,r 51 110 568 2,r 51 110 579.5 1,g 51 110 602 1,r 51 110 613.5 1,r 51 110 630 1,g 51 110 642.5 1,' +
  'g 114 570 614.5 1,r 114 570 630.5 2,g 114 570 642.5 1,r 114 570 659.5 1,g 114 570 663.5 1,o 114 411 695 1,r 114 570 719.5 1,' +
  'o 424 556 741 1,r 424 570 747 1,r 424 570 772 1,g 424 570 784.5 1,' +
  'o 574 871 636 1,r 574 1030 648.5 1,g 574 1030 653.5 1,r 574 1030 683 2,g 574 1030 711.5 1,' +
  'g 884 1030 554.5 1,r 884 1030 574.5 1,g 884 1030 583.5 1,r 884 1030 609 2,g 884 1030 630.5 1,r 884 1030 641.5 1,o 884 1016 659.5 1,r 884 1030 698.5 1,g 884 1030 704.5 1,' +
  'r 1034 1490 451.5 1,o 1034 1331 469.5 1,r 1034 1490 504.5 4,g 1034 1344 512.5 1,r 1034 1490 529.5 1,g 1034 1490 539.5 1,' +
  'r 1344 1490 346 1,g 1344 1490 356 1,g 1344 1490 377.5 1,r 1344 1490 380.5 3,g 1344 1490 421 1,r 1344 1490 429.5 1,g 1344 1490 456 1,r 1344 1490 464.5 1,r 1344 1490 484.5 1,r 1344 1490 512.5 1,o 1344 1476 320 1,o 1494 1560 262.5 1';

const vwap = '1148,538 1152,537 1160,537 1165,539 1171,541 1178,542 1185,541 1194,541 1198,535 1206,529 1214,525 1229,522 1236,512 1246,507 1260,504 1264,504 1270,501 1280,498 1288,494 1298,491 1309,489 1313,484 1322,479 1330,478 1335,478 1339,480 1342,490 1347,498 1355,499 1363,500 1369,499 1376,494 1385,491 1398,488 1404,482 1414,477 1424,470 1432,463 1440,454 1450,446 1463,437 1468,428 1474,424 1481,423 1489,421 1504,421 1509,419 1529,418 1535,417 1542,417 1548,416 1571,416';

add('rect', { x: 51, y: 123, width: 1586, height: 817, fill: '#141414' });
add('text', { x: 706, y: 564, class: 'mark' }, '@ES');

for (const x of [114, 574, 1034, 1494])
  add('path', { d: `M${x} 123V914`, stroke: '#555', 'stroke-width': 1.5, 'stroke-dasharray': '5 3' });
add('path', { d: 'M51 256.500H1571', stroke: '#777', 'stroke-dasharray': '5 3' });

volume.split(' ').forEach((v, i) => {
  const h = +v.slice(1) + 1;
  add('rect', { x: 52 + i * STEP, y: 914 - h, width: 4, height: h, fill: VCOL[v[0]] });
});

for (const g of candles) {
  g.d.split(',').forEach((s, i) => {
    const [c, hi, top, bot, lo] = s.split(' ');
    const x = g.x + i * STEP;
    const tall = bot - top > 40;
    const fill = tall ? VCOL[c] : COL[c];
    add('rect', { x: x - 0.75, y: g.base + +hi, width: 1.5, height: lo - hi, fill });
    add('rect', { x: x - 2, y: g.base + +top, width: 4, height: Math.max(1.5, bot - top), fill });
  });
}

for (const p of profiles) {
  const pts = p.d.split(',').map(s => s.split(' ').map(Number));
  let body = '', hi = '';
  for (let k = 0; k < pts.length - 1; k++) {
    const [y0, w0] = pts[k], [y1, w1] = pts[k + 1];
    for (let y = y0; y < y1; y++) {
      let w = w0 + (w1 - w0) * (y - y0) / (y1 - y0);
      w = Math.max(0, Math.round(w * (1 - ((y * 7919) % 5) * 0.03)));
      if (!w) continue;
      body += `M${p.x} ${y}h${w}v1h-${w}z`;
      if (y % 5 === 0) hi += `M${p.x} ${y}h${w}v1h-${w}z`;
    }
  }
  const grey = p.c === 'g';
  add('path', { d: body, fill: grey ? '#fff' : '#3d92f0', 'fill-opacity': grey ? 0.52 : 0.7 });
  add('path', { d: hi, fill: grey ? '#fff' : '#55a5ff', 'fill-opacity': 0.38 });
}

for (const s of levels.split(',')) {
  const [c, x1, x2, y, w] = s.split(' ');
  const t = Math.max(1.5, w);
  add('rect', { x: x1, y: y - t / 2, width: x2 - x1, height: t, fill: { r: '#ff5252', g: '#5df55d', o: '#c08a2a' }[c] });
}
add('polyline', { points: vwap, fill: 'none', stroke: '#459dff', 'stroke-width': 2.5, 'stroke-linejoin': 'round' });

/* axes */
add('path', { d: 'M51 914.500H1571.500V123', fill: 'none', stroke: '#8a8a8a' });
add('path', { d: 'M51 921.500H1579V123', fill: 'none', stroke: '#bdbdbd', 'stroke-width': 1.5 });
for (let p = 4916; p >= 4722; p -= 2) {
  const y = 189 + (4900 - p) * 4.09;
  if (y > 914) continue;
  const major = p % 20 === 0;
  add('path', { d: `M${major ? 1571 : 1575} ${y}H1579`, stroke: '#bdbdbd' });
  if (major) add('text', { x: 1582, y: Math.round(y + 4.5) }, p + '.00');
}
const times = [[134, 'Jan-17'], [214, '4:00'], [274, '7:00'], [334, '10:00'], [414, '14:00'], [494, '18:00'], [594, 'Jan-18'], [674, '4:00'], [734, '7:00'], [794, '10:00'], [874, '14:00'], [954, '18:00'], [1054, 'Jan-19'], [1134, '4:00'], [1194, '7:00'], [1254, ''], [1334, '14:00'], [1404, '17:30'], [1491, 'Jan-21']];
for (const [x, t] of times) {
  add('path', { d: `M${x} 914V921`, stroke: '#bdbdbd', 'stroke-width': 2 });
  add('text', { x, y: 934, class: 'mid' }, t);
}

/* crosshair */
add('path', { d: 'M1261.500 123V921M51 632.500H1571', stroke: '#dcdcdc' });
add('text', { x: 56, y: 908, class: 'site' }, 'edgeclear.com');
add('path', { d: 'M1528 868h15v-9l15 15-15 15v-9h-15z', fill: '#eee' });

function tag(y, w, fill, cls, t) {
  add('path', { d: `M1572 ${y}l8 -8h${w}q2 0 2 2v12q0 2 -2 2h-${w}z`, fill, stroke: '#555' });
  add('text', { x: 1582, y: y + 5, class: cls }, t);
}
tag(239, 51, '#2e5f8c', 'light', '4887.50');
tag(301, 51, '#a32c2c', 'light', '4872.50');
tag(256, 51, '#fff', 'dark small', '4883.25');
tag(632, 51, '#fff', 'dark', '4791.50');
tag(904, 33, '#fff', 'dark', '2405');
add('rect', { x: 1217, y: 920, width: 88, height: 17, rx: 3, fill: '#fff' });
add('text', { x: 1261, y: 934, class: 'mid dark' }, 'Jan-19 10:22');

/* note */
add('path', { d: 'M1169 547L1195 547L1188 553L1262 587L1253 592L1186 560L1186 568Z', fill: '#ff4141' });
add('rect', { x: 1253, y: 586, width: 200, height: 93, rx: 4, fill: '#ff4141' });
add('text', { x: 1352, y: 626, class: 'note' }, 'Anchored');
add('text', { x: 1352, y: 655, class: 'note' }, 'VWAP');
```
